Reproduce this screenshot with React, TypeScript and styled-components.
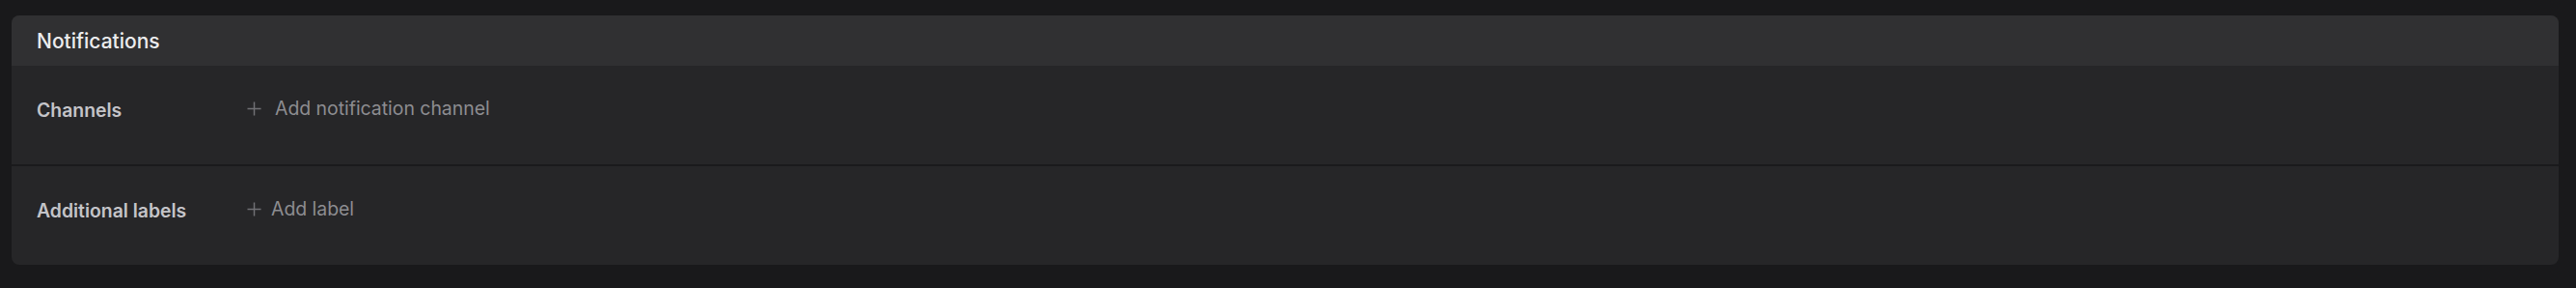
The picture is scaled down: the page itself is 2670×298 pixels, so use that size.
import React from "react";
import styled, { createGlobalStyle } from "styled-components";

const Global = createGlobalStyle`
  html, body {
    margin: 0;
    padding: 0;
    background: #19191b;
  }
  body {
    font-family: Inter, "Noto Sans", sans-serif;
    -webkit-font-smoothing: antialiased;
  }
`;

const Page = styled.div`
  padding: 16px 18px 24px 12px;
  background: #19191b;
`;

const Card = styled.section`
  background: #262628;
  border-radius: 8px;
  overflow: hidden;
`;

const Header = styled.header`
  height: 52px;
  display: flex;
  align-items: center;
  padding: 0 26px;
  background: #303032;
  color: #ececee;
  font-size: 21px;
  font-weight: 500;
`;

const Row = styled.div<{ $divider?: boolean }>`
  height: 102px;
  display: flex;
  align-items: flex-start;
  padding: 0 26px;
  border-top: ${(p) => (p.$divider ? "2px solid #1a1a1c" : "none")};
`;

const Label = styled.div`
  width: 218px;
  flex: none;
  margin-top: 32px;
  font-size: 19.4px;
  line-height: 28px;
  font-weight: 600;
  color: #c4c4c8;
`;

const AddButton = styled.button<{ $gap: number }>`
  display: flex;
  align-items: center;
  gap: ${(p) => p.$gap}px;
  margin-top: 30px;
  padding: 0;
  border: none;
  background: none;
  font-family: inherit;
  font-size: 19.4px;
  line-height: 28px;
  font-weight: 400;
  color: #8d8d91;
  cursor: pointer;
`;

const Plus = () => (
  <svg width="15" height="15" viewBox="0 0 15 15" fill="none">
    <path d="M7.5 0.5v14M0.5 7.5h14" stroke="#707074" strokeWidth="1.5" />
  </svg>
);

export default function App() {
  return (
    <>
      <Global />
      <Page>
        <Card>
          <Header>Notifications</Header>
          <Row>
            <Label>Channels</Label>
            <AddButton $gap={14}>
              <Plus />
              Add notification channel
            </AddButton>
          </Row>
          <Row $divider>
            <Label>Additional labels</Label>
            <AddButton $gap={10}>
              <Plus />
              Add label
            </AddButton>
          </Row>
        </Card>
      </Page>
    </>
  );
}
